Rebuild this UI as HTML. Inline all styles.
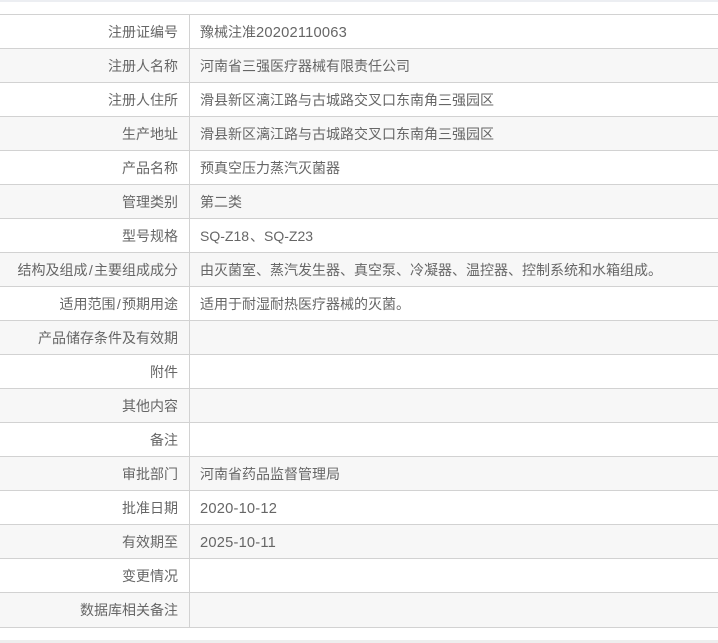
<!DOCTYPE html>
<html lang="zh">
<head>
<meta charset="utf-8">
<style>
html,body{margin:0;padding:0;background:#fff}
body{width:718px;height:643px;overflow:hidden;position:relative;font-family:"Liberation Sans","Noto Sans CJK SC",sans-serif;font-size:14px;color:#666}
.top{position:absolute;left:0;top:0;width:718px;height:2px;background:#eceef2}
.bot{position:absolute;left:0;top:640px;width:718px;height:3px;background:#eeeeee}
.t{position:absolute;left:0;top:14px;width:718px;border-top:1px solid #d2d2d2}
.r{height:33px;border-bottom:1px solid #d2d2d2;position:relative;line-height:35px;white-space:nowrap}
.r:last-child{height:34px}
.r:nth-child(even){background:#f7f7f7}
.l{position:absolute;left:0;top:0;width:178px;text-align:right;height:100%}
.l:after{content:"";position:absolute;left:189px;top:0;width:1px;height:100%;background:#d2d2d2}
.v{position:absolute;left:200px;top:0}
.n{font-size:14.7px;letter-spacing:.2px}
.m{display:inline-block;width:50px}
.s{padding:0 1.3px}
</style>
</head>
<body>
<div class="top"></div>
<div class="t">
<div class="r"><div class="l">注册证编号</div><div class="v">豫械注准<span class="n">20202110063</span></div></div>
<div class="r"><div class="l">注册人名称</div><div class="v">河南省三强医疗器械有限责任公司</div></div>
<div class="r"><div class="l">注册人住所</div><div class="v">滑县新区漓江路与古城路交叉口东南角三强园区</div></div>
<div class="r"><div class="l">生产地址</div><div class="v">滑县新区漓江路与古城路交叉口东南角三强园区</div></div>
<div class="r"><div class="l">产品名称</div><div class="v">预真空压力蒸汽灭菌器</div></div>
<div class="r"><div class="l">管理类别</div><div class="v">第二类</div></div>
<div class="r"><div class="l">型号规格</div><div class="v"><span class="m">SQ-Z18</span>、<span>SQ-Z23</span></div></div>
<div class="r"><div class="l">结构及组成<span class="s">/</span>主要组成成分</div><div class="v">由灭菌室、蒸汽发生器、真空泵、冷凝器、温控器、控制系统和水箱组成。</div></div>
<div class="r"><div class="l">适用范围<span class="s">/</span>预期用途</div><div class="v">适用于耐湿耐热医疗器械的灭菌。</div></div>
<div class="r"><div class="l">产品储存条件及有效期</div><div class="v"></div></div>
<div class="r"><div class="l">附件</div><div class="v"></div></div>
<div class="r"><div class="l">其他内容</div><div class="v"></div></div>
<div class="r"><div class="l">备注</div><div class="v"></div></div>
<div class="r"><div class="l">审批部门</div><div class="v">河南省药品监督管理局</div></div>
<div class="r"><div class="l">批准日期</div><div class="v"><span class="n">2020-10-12</span></div></div>
<div class="r"><div class="l">有效期至</div><div class="v"><span class="n">2025-10-11</span></div></div>
<div class="r"><div class="l">变更情况</div><div class="v"></div></div>
<div class="r"><div class="l">数据库相关备注</div><div class="v"></div></div>
</div>
<div class="bot"></div>
</body>
</html>
